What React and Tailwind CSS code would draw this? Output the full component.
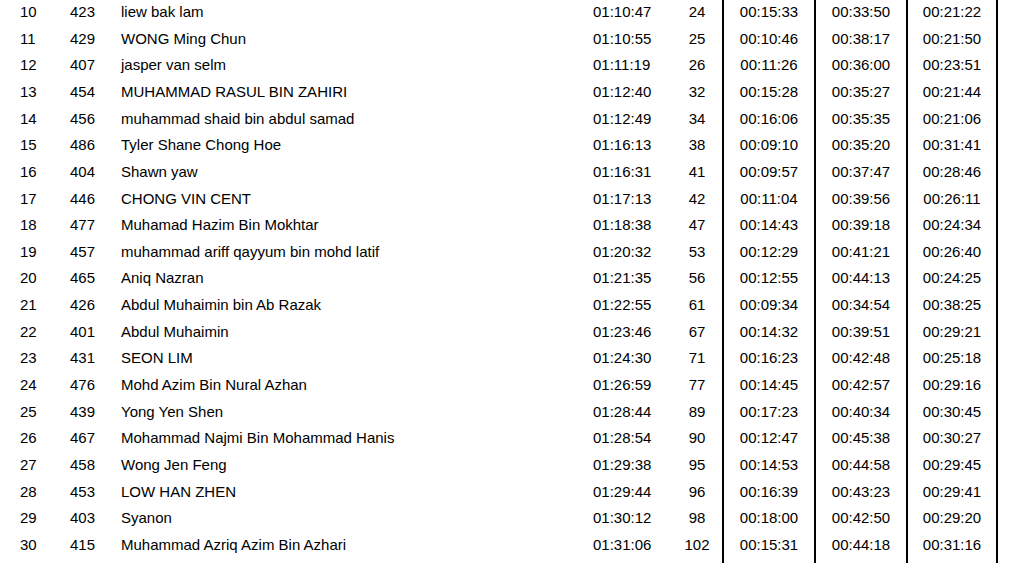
import React from "react";

const rows = [
  [10, 423, "liew bak lam", "01:10:47", 24, "00:15:33", "00:33:50", "00:21:22"],
  [11, 429, "WONG Ming Chun", "01:10:55", 25, "00:10:46", "00:38:17", "00:21:50"],
  [12, 407, "jasper van selm", "01:11:19", 26, "00:11:26", "00:36:00", "00:23:51"],
  [13, 454, "MUHAMMAD RASUL BIN ZAHIRI", "01:12:40", 32, "00:15:28", "00:35:27", "00:21:44"],
  [14, 456, "muhammad shaid bin abdul samad", "01:12:49", 34, "00:16:06", "00:35:35", "00:21:06"],
  [15, 486, "Tyler Shane Chong Hoe", "01:16:13", 38, "00:09:10", "00:35:20", "00:31:41"],
  [16, 404, "Shawn yaw", "01:16:31", 41, "00:09:57", "00:37:47", "00:28:46"],
  [17, 446, "CHONG VIN CENT", "01:17:13", 42, "00:11:04", "00:39:56", "00:26:11"],
  [18, 477, "Muhamad Hazim Bin Mokhtar", "01:18:38", 47, "00:14:43", "00:39:18", "00:24:34"],
  [19, 457, "muhammad ariff qayyum bin mohd latif", "01:20:32", 53, "00:12:29", "00:41:21", "00:26:40"],
  [20, 465, "Aniq Nazran", "01:21:35", 56, "00:12:55", "00:44:13", "00:24:25"],
  [21, 426, "Abdul Muhaimin bin Ab Razak", "01:22:55", 61, "00:09:34", "00:34:54", "00:38:25"],
  [22, 401, "Abdul Muhaimin", "01:23:46", 67, "00:14:32", "00:39:51", "00:29:21"],
  [23, 431, "SEON LIM", "01:24:30", 71, "00:16:23", "00:42:48", "00:25:18"],
  [24, 476, "Mohd Azim Bin Nural Azhan", "01:26:59", 77, "00:14:45", "00:42:57", "00:29:16"],
  [25, 439, "Yong Yen Shen", "01:28:44", 89, "00:17:23", "00:40:34", "00:30:45"],
  [26, 467, "Mohammad Najmi Bin Mohammad Hanis", "01:28:54", 90, "00:12:47", "00:45:38", "00:30:27"],
  [27, 458, "Wong Jen Feng", "01:29:38", 95, "00:14:53", "00:44:58", "00:29:45"],
  [28, 453, "LOW HAN ZHEN", "01:29:44", 96, "00:16:39", "00:43:23", "00:29:41"],
  [29, 403, "Syanon", "01:30:12", 98, "00:18:00", "00:42:50", "00:29:20"],
  [30, 415, "Muhammad Azriq Azim Bin Azhari", "01:31:06", 102, "00:15:31", "00:44:18", "00:31:16"],
];

export default function App() {
  return (
    <div className="h-[563px] w-[1017px] overflow-hidden bg-white text-black font-['Liberation_Sans',Arial,sans-serif] text-[15px]">
      <div className="flex h-full">
        {/* left part: rank, bib, name, time, place */}
        <div className="w-[722px] -mt-[1px]">
          {rows.map((r) => (
            <div key={r[0]} className="flex h-[26.65px] items-center">
              <div className="w-[70px] pl-[20px]">{r[0]}</div>
              <div className="w-[51px]">{r[1]}</div>
              <div className="w-[472px] whitespace-nowrap">{r[2]}</div>
              <div className="w-[79px]">{r[3]}</div>
              <div className="w-[50px] text-center">{r[4]}</div>
            </div>
          ))}
        </div>
        {/* split columns */}
        {[5, 6, 7].map((c, i) => (
          <div
            key={c}
            className={`w-[92px] border-l-2 border-black ${i === 2 ? "border-r-2" : ""}`}
          >
            <div className="-mt-[1px]">
              {rows.map((r) => (
                <div key={r[0]} className="flex h-[26.65px] items-center justify-center">
                  {r[c]}
                </div>
              ))}
            </div>
          </div>
        ))}
      </div>
    </div>
  );
}
